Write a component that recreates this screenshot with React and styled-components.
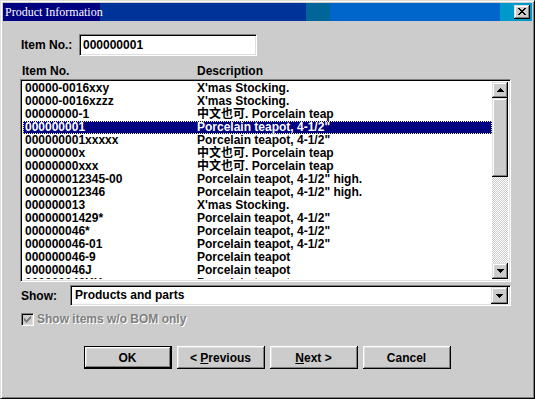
import React from "react";
import styled, { createGlobalStyle } from "styled-components";

const GlobalStyle = createGlobalStyle`
  html, body {
    margin: 0;
    padding: 0;
    background: #cccccc;
  }
  body {
    font-family: "Liberation Sans", "Noto Sans CJK TC", Arial, sans-serif;
  }
`;

const raised = `
  background: #cccccc;
  box-shadow: inset -1px -1px #000, inset 1px 1px #dfdfdf,
    inset -2px -2px #808080, inset 2px 2px #fff;
`;

const sunken = `
  box-sizing: border-box;
  border: 1px solid;
  border-color: #808080 #fff #fff #808080;
  box-shadow: inset 1px 1px #000, inset -1px -1px #dfdfdf;
`;

const Window = styled.div`
  box-sizing: border-box;
  width: 535px;
  height: 399px;
  background: #cccccc;
  border: 1px solid;
  border-color: #dfdfdf #000 #000 #dfdfdf;
  box-shadow: inset 1px 1px #fff, inset -1px -1px #808080;
  padding: 2px;
  display: flex;
  flex-direction: column;
`;

const TitleBar = styled.div`
  height: 18px;
  display: flex;
  align-items: center;
  justify-content: space-between;
  padding: 0 2px;
  background: linear-gradient(
    to right,
    #000080 0 97px,
    #003399 97px 303px,
    #006699 303px 327px,
    #0066cc 327px 497px,
    #0099cc 497px
  );
`;

const TitleText = styled.span`
  color: #fff;
  font-family: "Liberation Serif", "Noto Sans CJK TC", serif;
  font-size: 12px;
  line-height: 18px;
`;

const CloseButton = styled.div`
  ${raised}
  width: 16px;
  height: 14px;
  display: flex;
  align-items: center;
  justify-content: center;
  svg {
    margin-top: -1px;
  }
`;

const Content = styled.div`
  display: flex;
  flex-direction: column;
  padding: 13px 18px 0 17px;
  font-size: 12px;
  font-weight: bold;
  color: #000;
`;

const FieldRow = styled.div`
  display: flex;
  align-items: center;
`;

const Label = styled.span`
  width: ${(p) => p.$width}px;
  padding-left: 1px;
  box-sizing: border-box;
  line-height: 14px;
`;

const TextInput = styled.div`
  ${sunken}
  width: 178px;
  height: 22px;
  background: #fff;
  padding: 0 3px;
  line-height: 20px;
`;

const HeaderRow = styled.div`
  display: grid;
  grid-template-columns: 175px 1fr;
  padding-left: 2px;
  margin-top: 8px;
  line-height: 14px;
  height: 14px;
`;

const ListBox = styled.div`
  ${sunken}
  margin-top: 1px;
  width: 491px;
  height: 203px;
  background: #fff;
  padding: 2px;
  display: flex;
`;

const Rows = styled.div`
  flex: 1;
  overflow: hidden;
`;

const Row = styled.div`
  display: grid;
  grid-template-columns: 172px 1fr;
  padding-left: 2px;
  height: 13px;
  line-height: 13px;
  white-space: nowrap;
  color: ${(p) => (p.$selected ? "#fff" : "#000")};
  background: ${(p) => (p.$selected ? "#000080" : "transparent")};
  outline: ${(p) => (p.$selected ? "1px dotted #f4f4a0" : "none")};
  outline-offset: -1px;
`;

const ScrollBar = styled.div`
  width: 16px;
  display: flex;
  flex-direction: column;
`;

const ArrowButton = styled.div`
  ${raised}
  width: ${(p) => p.$width || 16}px;
  height: ${(p) => p.$height || 16}px;
  flex: none;
  display: flex;
  align-items: center;
  justify-content: center;
`;

const Thumb = styled.div`
  ${raised}
  height: 79px;
  flex: none;
`;

const Track = styled.div`
  flex: 1;
  background: repeating-conic-gradient(#fff 0 25%, #cccccc 0 50%) 0 0 / 2px 2px;
`;

const ShowRow = styled(FieldRow)`
  margin-top: 3px;
`;

const Combo = styled.div`
  ${sunken}
  width: 441px;
  height: 21px;
  background: #fff;
  padding: 2px 2px 2px 4px;
  display: flex;
  align-items: center;
  justify-content: space-between;
  line-height: 17px;
`;

const CheckRow = styled.div`
  display: flex;
  align-items: center;
  margin-top: 7px;
  padding-left: 1px;
  height: 13px;
`;

const CheckBox = styled.div`
  ${sunken}
  width: 13px;
  height: 13px;
  background: #cccccc;
  display: flex;
  align-items: center;
  justify-content: center;
`;

const DisabledText = styled.span`
  margin-left: 3px;
  color: #808080;
  text-shadow: 1px 1px #fff;
  line-height: 13px;
`;

const ButtonRow = styled.div`
  display: flex;
  justify-content: center;
  gap: 5px;
  margin-top: 20px;
`;

const Button = styled.div`
  box-sizing: border-box;
  width: 88px;
  height: 23px;
  display: flex;
  align-items: center;
  justify-content: center;
  background: #cccccc;
  ${(p) =>
    p.$default
      ? `border: 1px solid #000;
         box-shadow: inset -1px -1px #000, inset 1px 1px #fff, inset -2px -2px #808080, inset 2px 2px #dfdfdf;`
      : `box-shadow: inset -1px -1px #000, inset 1px 1px #fff, inset -2px -2px #808080, inset 2px 2px #dfdfdf;`}
  u {
    text-decoration: underline;
    text-underline-offset: 1px;
  }
`;

const Pixels = ({ d, w, h, color = "#000" }) => (
  <svg width={w} height={h} viewBox={`0 0 ${w} ${h}`} shapeRendering="crispEdges">
    <path d={d} fill={color} />
  </svg>
);

const CLOSE_X =
  "M0 0h2v1h-2z M6 0h2v1h-2z M1 1h2v1h-2z M5 1h2v1h-2z M2 2h4v1h-4z M3 3h2v1h-2z M2 4h4v1h-4z M1 5h2v1h-2z M5 5h2v1h-2z M0 6h2v1h-2z M6 6h2v1h-2z";
const UP = "M3 0h1v1h-1z M2 1h3v1h-3z M1 2h5v1h-5z M0 3h7v1h-7z";
const DOWN = "M0 0h7v1h-7z M1 1h5v1h-5z M2 2h3v1h-3z M3 3h1v1h-1z";
const CHECK =
  "M6 0h1v1h-1z M5 1h2v1h-2z M0 2h1v1h-1z M4 2h3v1h-3z M0 3h2v1h-2z M3 3h3v1h-3z M0 4h5v1h-5z M1 5h3v1h-3z M2 6h1v1h-1z";

const items = [
  ["00000-0016xxy", "X'mas Stocking."],
  ["00000-0016xzzz", "X'mas Stocking."],
  ["00000000-1", "中文也可. Porcelain teap"],
  ["000000001", 'Porcelain teapot, 4-1/2"'],
  ["000000001xxxxx", 'Porcelain teapot, 4-1/2"'],
  ["00000000x", "中文也可. Porcelain teap"],
  ["00000000xxx", "中文也可. Porcelain teap"],
  ["000000012345-00", 'Porcelain teapot, 4-1/2" high.'],
  ["000000012346", 'Porcelain teapot, 4-1/2" high.'],
  ["000000013", "X'mas Stocking."],
  ["00000001429*", 'Porcelain teapot, 4-1/2"'],
  ["000000046*", 'Porcelain teapot, 4-1/2"'],
  ["000000046-01", 'Porcelain teapot, 4-1/2"'],
  ["000000046-9", "Porcelain teapot"],
  ["000000046J", "Porcelain teapot"],
  ["000000046KK", "Porcelain teapot"],
];

const App = () => {
  return (
    <>
      <GlobalStyle />
      <Window>
        <TitleBar>
          <TitleText>Product Information</TitleText>
          <CloseButton>
            <Pixels d={CLOSE_X} w={8} h={7} />
          </CloseButton>
        </TitleBar>
        <Content>
          <FieldRow>
            <Label $width={59}>Item No.:</Label>
            <TextInput>000000001</TextInput>
          </FieldRow>
          <HeaderRow>
            <span>Item No.</span>
            <span>Description</span>
          </HeaderRow>
          <ListBox>
            <Rows>
              {items.map(([no, desc], index) => (
                <Row key={index} $selected={index === 3}>
                  <span>{no}</span>
                  <span>{desc}</span>
                </Row>
              ))}
            </Rows>
            <ScrollBar>
              <ArrowButton>
                <Pixels d={UP} w={7} h={4} />
              </ArrowButton>
              <Thumb />
              <Track />
              <ArrowButton>
                <Pixels d={DOWN} w={7} h={4} />
              </ArrowButton>
            </ScrollBar>
          </ListBox>
          <ShowRow>
            <Label $width={50}>Show:</Label>
            <Combo>
              <span>Products and parts</span>
              <ArrowButton $width={17} $height={17}>
                <Pixels d={DOWN} w={7} h={4} />
              </ArrowButton>
            </Combo>
          </ShowRow>
          <CheckRow>
            <CheckBox>
              <Pixels d={CHECK} w={7} h={7} color="#808080" />
            </CheckBox>
            <DisabledText>Show items w/o BOM only</DisabledText>
          </CheckRow>
          <ButtonRow>
            <Button $default>OK</Button>
            <Button>
              &lt;&nbsp;<u>P</u>revious
            </Button>
            <Button>
              <u>N</u>ext &gt;
            </Button>
            <Button>Cancel</Button>
          </ButtonRow>
        </Content>
      </Window>
    </>
  );
};

export default App;
